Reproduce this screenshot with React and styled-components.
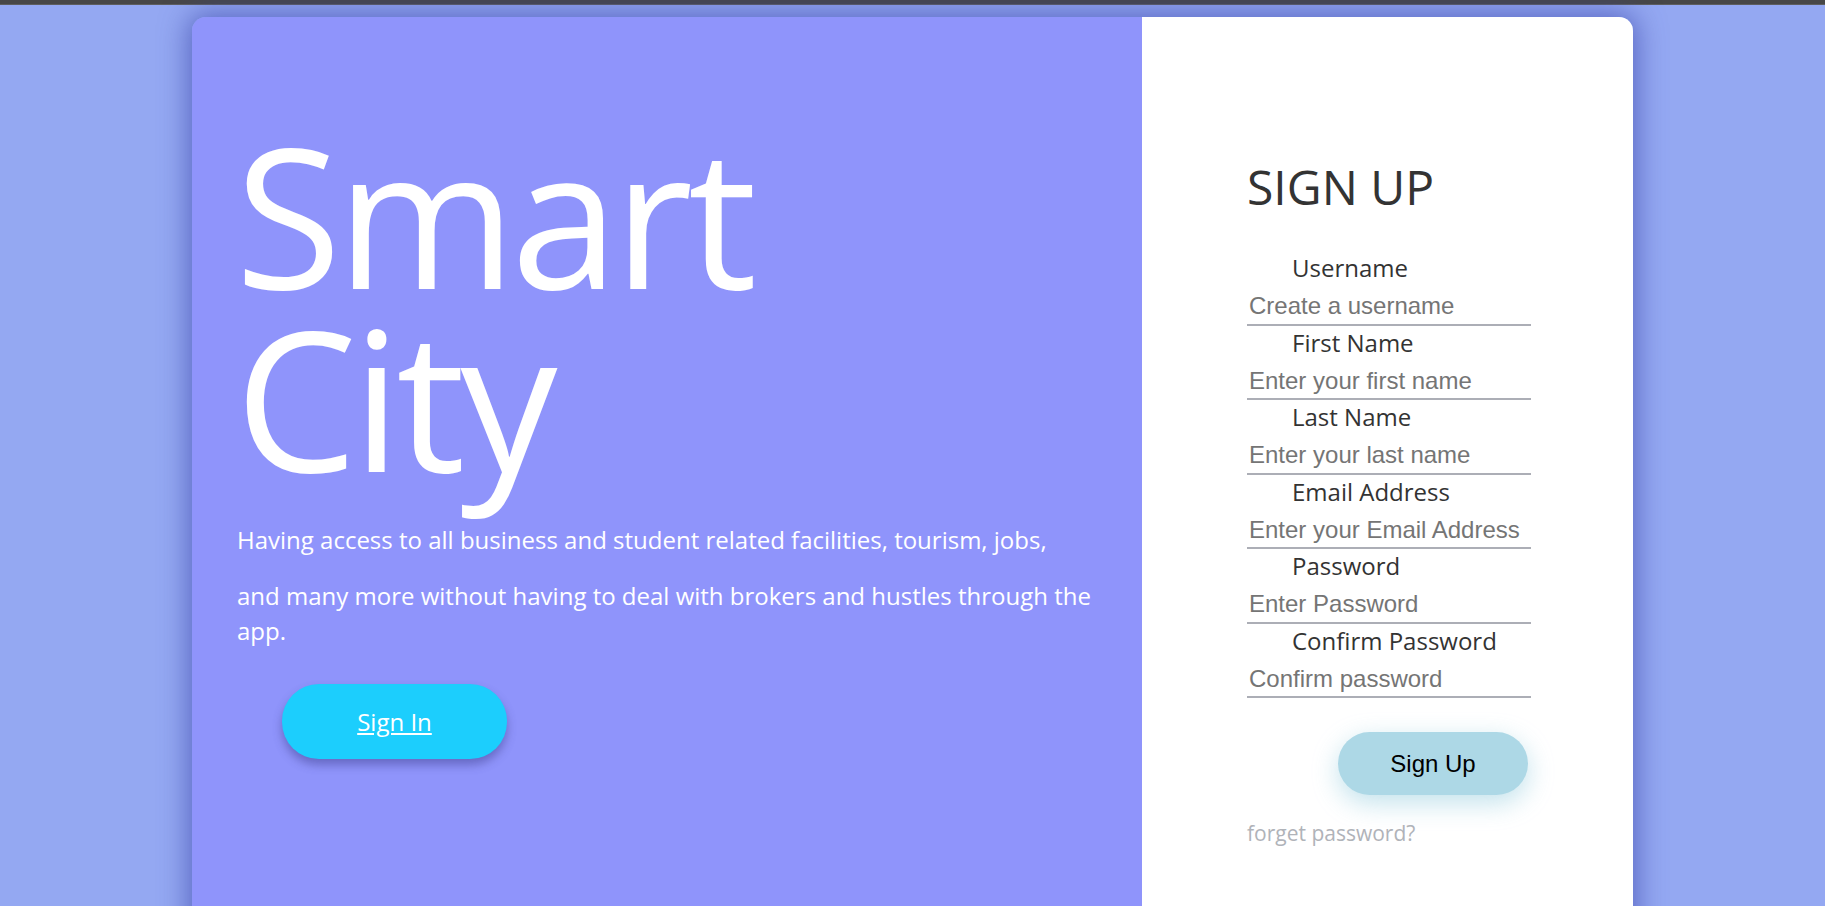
import styled, { createGlobalStyle } from "styled-components";

const GlobalStyle = createGlobalStyle`
  html, body {
    margin: 0;
    height: 100%;
    overflow: hidden;
  }

  body {
    font-family: "Open Sans", "Liberation Sans", sans-serif;
    background-color: #94a8f2;
  }
`

const TopStrip = styled.div`
  height: 4px;
  background-color: #474747;
  border-bottom: 1px solid #5e5e5e;
`

const Page = styled.div`
  padding-top: 12px;
`

const Card = styled.div`
  display: flex;
  width: 1441px;
  height: 940px;
  margin: 0 auto;
  border-radius: 14px;
  overflow: hidden;
  box-shadow: 0 0 28px 4px rgba(60, 70, 170, 0.65);
`

const Hero = styled.div`
  flex: 0 0 950px;
  display: flex;
  flex-direction: column;
  align-items: flex-start;
  box-sizing: border-box;
  padding: 106px 22px 0 43px;
  background-color: #8f94fb;
  color: white;
`

const Title = styled.h1`
  margin: 0 0 34px;
  font-size: 194px;
  line-height: 183px;
  font-weight: 400;
  letter-spacing: -5px;
`

const Text = styled.p`
  margin: 0 0 ${props => props.$gap}px 2px;
  font-size: 24px;
  line-height: 34.3px;
`

const SignInButton = styled.button`
  display: flex;
  align-items: center;
  justify-content: center;
  width: 225px;
  height: 75px;
  margin-left: 47px;
  border: none;
  border-radius: 37px;
  background-color: #1ccefd;
  box-shadow: 0 6px 10px rgba(55, 55, 130, 0.45);
  color: white;
  font-family: "Open Sans", sans-serif;
  font-size: 24px;
  text-decoration: underline;
  cursor: pointer;
`

const FormPanel = styled.div`
  flex: 1;
  box-sizing: border-box;
  padding: 140px 0 0 105px;
  background-color: white;
`

const Form = styled.form`
  display: flex;
  flex-direction: column;
  align-items: flex-start;
  width: 284px;
`

const FormTitle = styled.h2`
  margin: 0 0 34px;
  font-size: 48px;
  line-height: 60px;
  font-weight: 400;
  color: #333;
`

const Field = styled.div`
  display: flex;
  flex-direction: column;
  width: 100%;
`

const Label = styled.label`
  margin-left: 45px;
  font-size: 24px;
  line-height: 33.5px;
  color: #333;
`

const Input = styled.input`
  box-sizing: border-box;
  width: 100%;
  height: 41px;
  padding: 4px 2px 0;
  border: none;
  border-bottom: 2px solid #acaeb6;
  outline: none;
  background: transparent;
  font-family: "Liberation Sans", Arial, sans-serif;
  font-size: 24px;
  color: #222;

  &::placeholder {
    color: #757575;
  }
`

const SignUpButton = styled.button`
  width: 190px;
  height: 63px;
  margin: 34px 0 0 91px;
  border: none;
  border-radius: 32px;
  background-color: #add8e6;
  box-shadow: 0 8px 26px rgba(173, 216, 230, 0.75);
  color: black;
  font-family: "Liberation Sans", Arial, sans-serif;
  font-size: 24px;
  cursor: pointer;
`

const ForgetLink = styled.span`
  margin-top: 24px;
  font-size: 21px;
  color: #b0b3b9;
  cursor: pointer;
`

const fields = [
    { label: "Username", placeholder: "Create a username", type: "text" },
    { label: "First Name", placeholder: "Enter your first name", type: "text" },
    { label: "Last Name", placeholder: "Enter your last name", type: "text" },
    { label: "Email Address", placeholder: "Enter your Email Address", type: "email" },
    { label: "Password", placeholder: "Enter Password", type: "password" },
    { label: "Confirm Password", placeholder: "Confirm password", type: "password" },
]

const App = () => {
    return (
        <>
            <GlobalStyle/>
            <TopStrip/>
            <Page>
                <Card>
                    <Hero>
                        <Title>Smart<br/>City</Title>
                        <Text $gap={22}>Having access to all business and student related facilities, tourism, jobs,</Text>
                        <Text $gap={36}>and many more without having to deal with brokers and hustles through the app.</Text>
                        <SignInButton>Sign In</SignInButton>
                    </Hero>
                    <FormPanel>
                        <Form onSubmit={(e) => e.preventDefault()}>
                            <FormTitle>SIGN UP</FormTitle>
                            {fields.map((field) => (
                                <Field key={field.label}>
                                    <Label>{field.label}</Label>
                                    <Input type={field.type} placeholder={field.placeholder}/>
                                </Field>
                            ))}
                            <SignUpButton type="submit">Sign Up</SignUpButton>
                            <ForgetLink>forget password?</ForgetLink>
                        </Form>
                    </FormPanel>
                </Card>
            </Page>
        </>
    )
}

export default App
